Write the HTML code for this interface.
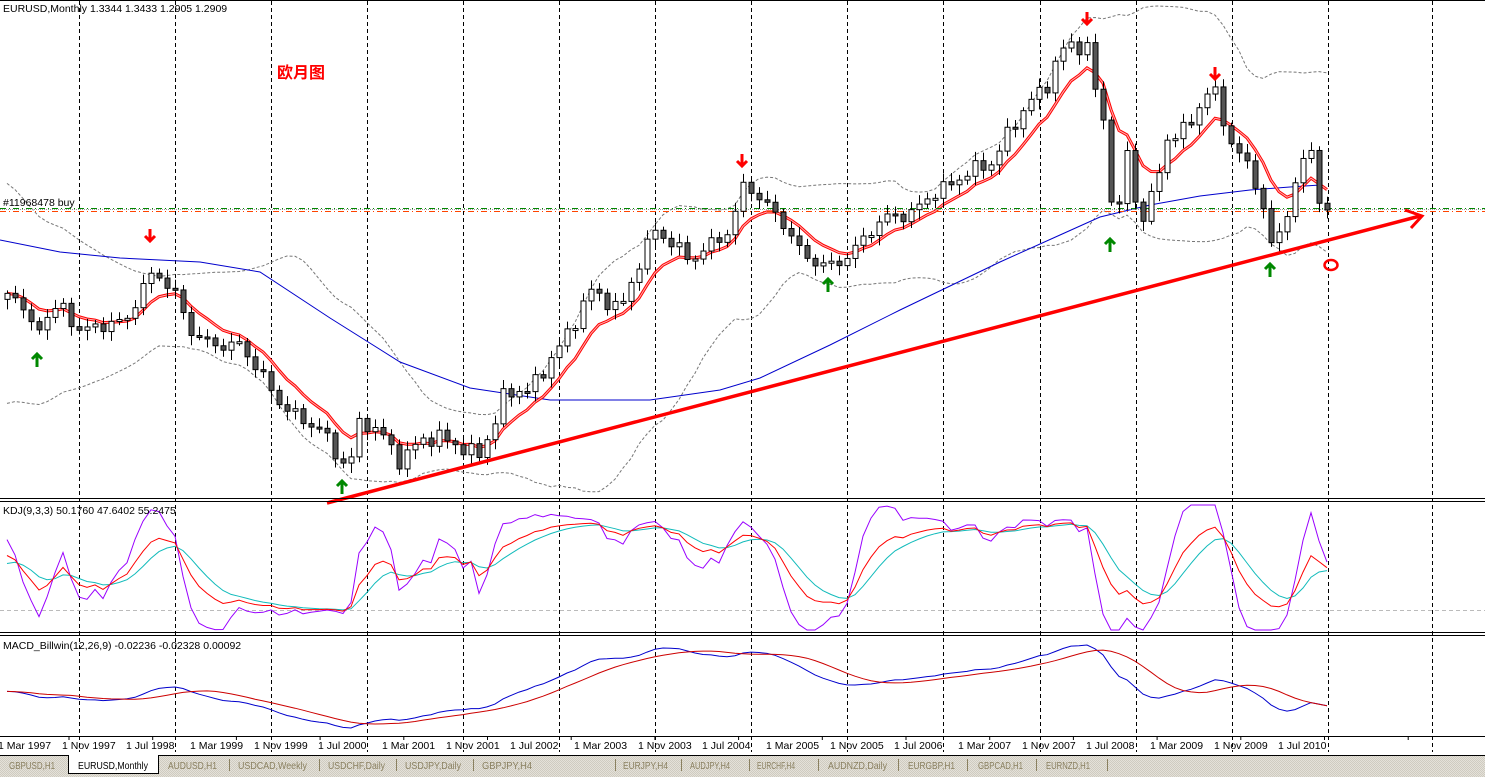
<!DOCTYPE html>
<html><head><meta charset="utf-8"><style>
html,body{margin:0;padding:0;background:#fff;width:1485px;height:777px;overflow:hidden}
svg{display:block}
text{font-family:"Liberation Sans","Noto Sans CJK SC",sans-serif;font-size:10.5px;fill:#000}
</style></head><body>
<svg id="s" width="1485" height="777" xmlns="http://www.w3.org/2000/svg">
<rect x="0" y="0" width="1485" height="777" fill="#fff"/>
<defs><pattern id="hat" width="2" height="2" patternUnits="userSpaceOnUse"><rect width="2" height="2" fill="#e4e1d9"/><rect width="1" height="1" fill="#cfcbc0"/><rect x="1" y="1" width="1" height="1" fill="#cfcbc0"/></pattern></defs>
<g id="grid"></g>
<g id="bands"></g>
<g id="ind"></g>
<g id="cand"></g>
<g id="ov"></g>
<line x1="0" y1="0.5" x2="1485" y2="0.5" stroke="#000"/>
<line x1="0" y1="498.5" x2="1485" y2="498.5" stroke="#000"/><line x1="0" y1="501.5" x2="1485" y2="501.5" stroke="#000"/>
<line x1="0" y1="632.5" x2="1485" y2="632.5" stroke="#000"/><line x1="0" y1="635.5" x2="1485" y2="635.5" stroke="#000"/>
<line x1="0" y1="736.5" x2="1485" y2="736.5" stroke="#000"/>
<text x="3" y="12">EURUSD,Monthly  1.3344 1.3433 1.2905 1.2909</text>
<text x="3" y="206">#11968478 buy</text>
<text x="277" y="78" style="font-size:16px;font-weight:bold;fill:#f00">欧月图</text>
<text x="3" y="514">KDJ(9,3,3) 50.1760 47.6402 55.2475</text>
<text x="3" y="649">MACD_Billwin(12,26,9) -0.02236 -0.02328 0.00092</text>
<g id="axis"></g>
<rect x="0" y="755" width="1485" height="22" fill="url(#hat)"/>
<line x1="0" y1="755.5" x2="1485" y2="755.5" stroke="#000"/>
<path d="M68.5 755.5V773.5H158.5V755.5" fill="#fff" stroke="#000"/>
<rect x="69" y="755" width="89" height="18" fill="#fff"/>
<g id="tabs"></g>
</svg>
<script>
var NS="http://www.w3.org/2000/svg";
function el(p,t,a,tx){var e=document.createElementNS(NS,t);for(var k in a)e.setAttribute(k,a[k]);if(tx!=null)e.textContent=tx;document.getElementById(p).appendChild(e);return e;}
[79,175,271,367,463,559,655,751,847,943,1040,1136,1232,1328,1432].forEach(function(x){
 el("grid","line",{x1:x+.5,y1:1,x2:x+.5,y2:752,stroke:"#000","stroke-dasharray":"4,3"});});
el("grid","line",{x1:0,y1:610.5,x2:1485,y2:610.5,stroke:"#bbb","stroke-dasharray":"4,3"});
var L=["1 Mar 1997","1 Nov 1997","1 Jul 1998","1 Mar 1999","1 Nov 1999","1 Jul 2000","1 Mar 2001","1 Nov 2001","1 Jul 2002","1 Mar 2003","1 Nov 2003","1 Jul 2004","1 Mar 2005","1 Nov 2005","1 Jul 2006","1 Mar 2007","1 Nov 2007","1 Jul 2008","1 Mar 2009","1 Nov 2009","1 Jul 2010"];
L.forEach(function(t,i){el("axis","text",{x:-2+i*64,y:749},t);});
for(var i=0;i<18;i++){var x=69+i*83.7;el("axis","line",{x1:x,y1:737,x2:x,y2:740,stroke:"#000"});}
var T=[["GBPUSD,H1",9,46],["EURUSD,Monthly",78,70],["AUDUSD,H1",168,49],["USDCAD,Weekly",238,69],["USDCHF,Daily",328,57],["USDJPY,Daily",405,56],["GBPJPY,H4",482,50],["EURJPY,H4",623,45],["AUDJPY,H4",690,40],["EURCHF,H4",757,38],["AUDNZD,Daily",828,59],["EURGBP,H1",908,47],["GBPCAD,H1",978,45],["EURNZD,H1",1046,44]];
T.forEach(function(t,i){el("tabs","text",{x:t[1],y:769,textLength:t[2],lengthAdjust:"spacingAndGlyphs",style:i==1?"fill:#000":"fill:#8a8060"},t[0]);});
[229,319,396,473,615,681,749,818,898,967,1036,1107].forEach(function(x){el("tabs","line",{x1:x+.5,y1:759,x2:x+.5,y2:771,stroke:"#8a8060"});});
var K=[[7,290],[20,300],[32,332],[45,318],[60,305],[80,332],[100,325],[125,322],[140,292],[155,270],[175,295],[190,330],[210,345],[240,345],[260,372],[275,398],[300,420],[320,428],[340,462],[350,462],[360,420],[380,432],[400,462],[420,440],[440,437],[470,452],[480,455],[495,420],[505,392],[530,390],[550,360],[570,330],[590,290],[605,300],[620,310],[640,260],[655,230],[670,242],[690,260],[710,245],[730,230],[745,180],[760,200],[780,218],[800,252],[820,265],[830,266],[850,255],[870,230],[890,215],[910,215],[930,195],[950,185],[970,170],[990,165],[1010,130],[1030,100],[1045,90],[1060,50],[1075,45],[1090,48],[1095,90],[1105,130],[1113,215],[1120,210],[1127,150],[1137,215],[1145,215],[1155,190],[1165,140],[1185,130],[1200,105],[1210,88],[1218,98],[1228,140],[1245,162],[1260,190],[1268,245],[1276,245],[1284,215],[1292,200],[1300,165],[1312,148],[1320,205],[1327,210]];
function ip(x){for(var i=1;i<K.length;i++){if(x<=K[i][0]){var a=K[i-1],b=K[i];return a[1]+(b[1]-a[1])*(x-a[0])/(b[0]-a[0]);}}return K[K.length-1][1];}
var N=166,C=[],O=[],H=[],Lo=[],X=[];
for(var i=0;i<N;i++){X[i]=7+8*i;C[i]=ip(X[i])+5*Math.sin(i*1.7)+4*Math.sin(i*3.1+1);}
C[N-1]=210;
for(var i=0;i<N;i++){O[i]=i?C[i-1]:C[0]+6;var r1=3+6*Math.abs(Math.sin(i*2.3)),r2=3+7*Math.abs(Math.cos(i*1.9));H[i]=Math.min(O[i],C[i])-r1;Lo[i]=Math.max(O[i],C[i])+r2;}
function poly(pts){return pts.map(function(p){return p[0].toFixed(1)+","+p[1].toFixed(1)}).join(" ");}
var P=20,up=[],dn=[];
for(var i=0;i<N;i++){var s=Math.max(0,i-P+1),n=i-s+1,m=0,v=0;for(var j=s;j<=i;j++)m+=C[j];m/=n;for(var j=s;j<=i;j++)v+=(C[j]-m)*(C[j]-m);v=Math.sqrt(v/n);var d=Math.max(2*v,30);if(i<20)d=Math.max(d,110-i*4);up.push([X[i],m-d]);dn.push([X[i],m+d]);}
el("bands","polyline",{points:poly(up),fill:"none",stroke:"#777","stroke-dasharray":"3,2"});
el("bands","polyline",{points:poly(dn),fill:"none",stroke:"#777","stroke-dasharray":"3,2"});
var B=[[0,240],[60,252],[120,258],[200,262],[260,272],[330,318],[400,362],[470,388],[550,400],[650,400],[720,390],[760,378],[830,345],[900,310],[1000,262],[1060,235],[1100,217],[1150,205],[1200,196],[1250,190],[1290,187],[1320,185]];
el("ind","polyline",{points:poly(B),fill:"none",stroke:"#00c"});
var e=C[0],R=[];for(var i=0;i<N;i++){e=e+(C[i]-e)*2/9;R.push([X[i],e]);}
el("ind","polyline",{points:poly(R),fill:"none",stroke:"#f00","stroke-width":3});
el("ind","polyline",{points:poly(R),fill:"none",stroke:"#ffb0b0","stroke-width":1});
el("ind","line",{x1:0,y1:209.5,x2:1485,y2:209.5,stroke:"#999","stroke-dasharray":"1,1"});
el("ind","line",{x1:0,y1:208.5,x2:1485,y2:208.5,stroke:"#080","stroke-dasharray":"6,3,1,3"});
el("ind","line",{x1:0,y1:211.5,x2:1485,y2:211.5,stroke:"#f40","stroke-dasharray":"6,3,1,3"});
for(var i=0;i<N;i++){var x=X[i];el("cand","line",{x1:x+.5,y1:H[i],x2:x+.5,y2:Lo[i],stroke:"#000"});
 var t=Math.min(O[i],C[i]),h=Math.max(2,Math.abs(O[i]-C[i]));
 el("cand","rect",{x:x-2,y:t,width:5,height:h,fill:C[i]>O[i]?"#555":"#fff",stroke:"#000"});}
el("ov","line",{x1:327,y1:503,x2:1420,y2:216,stroke:"#f00","stroke-width":3.5});
el("ov","path",{d:"M1405 210L1422 216L1411 228",fill:"none",stroke:"#f00","stroke-width":3});
el("ov","ellipse",{cx:1331,cy:265,rx:6.5,ry:5,fill:"none",stroke:"#f00","stroke-width":2.5});
[[150,237],[742,162],[1087,20],[1215,75]].forEach(function(p){el("ov","path",{d:"M"+p[0]+" "+(p[1]-8)+"v12M"+(p[0]-5)+" "+(p[1]-1)+"l5 5 5-5",fill:"none",stroke:"#f00","stroke-width":3});});
[[37,360],[342,487],[828,285],[1110,245],[1270,270]].forEach(function(p){el("ov","path",{d:"M"+p[0]+" "+(p[1]+7)+"v-12M"+(p[0]-5)+" "+(p[1]-1)+"l5-5 5 5",fill:"none",stroke:"#080","stroke-width":3});});
var kk=50,dd=50,Kp=[],Dp=[],Jp=[];
function ky(v){return Math.max(505,Math.min(630,620-v*1.05));}
for(var i=0;i<N;i++){var s=Math.max(0,i-8),hi=1e9,lo=-1e9;for(var j=s;j<=i;j++){hi=Math.min(hi,H[j]);lo=Math.max(lo,Lo[j]);}
 var rsv=(lo-C[i])/Math.max(1,lo-hi)*100;kk=kk*2/3+rsv/3;dd=dd*2/3+kk/3;var jj=3*kk-2*dd;
 Kp.push([X[i],ky(kk)]);Dp.push([X[i],ky(dd)]);Jp.push([X[i],ky(jj)]);}
el("ind","polyline",{points:poly(Jp),fill:"none",stroke:"#90f"});
el("ind","polyline",{points:poly(Dp),fill:"none",stroke:"#1bb"});
el("ind","polyline",{points:poly(Kp),fill:"none",stroke:"#f00"});
var e1=-C[0],e2=-C[0],M=[],S=[];
for(var i=0;i<N;i++){e1+=(-C[i]-e1)*2/13;e2+=(-C[i]-e2)*2/27;M.push(e1-e2);var s=Math.max(0,i-8),a=0;for(var j=s;j<=i;j++)a+=M[j];S.push(a/(i-s+1));}
var mx=Math.max.apply(null,M.concat(S)),mn=Math.min.apply(null,M.concat(S));
function my(v){return 728-(v-mn)/(mx-mn)*83;}
el("ind","polyline",{points:poly(M.map(function(v,i){return[X[i],my(v)]})),fill:"none",stroke:"#00c"});
el("ind","polyline",{points:poly(S.map(function(v,i){return[X[i],my(v)]})),fill:"none",stroke:"#c00"});
</script>
</body></html>
